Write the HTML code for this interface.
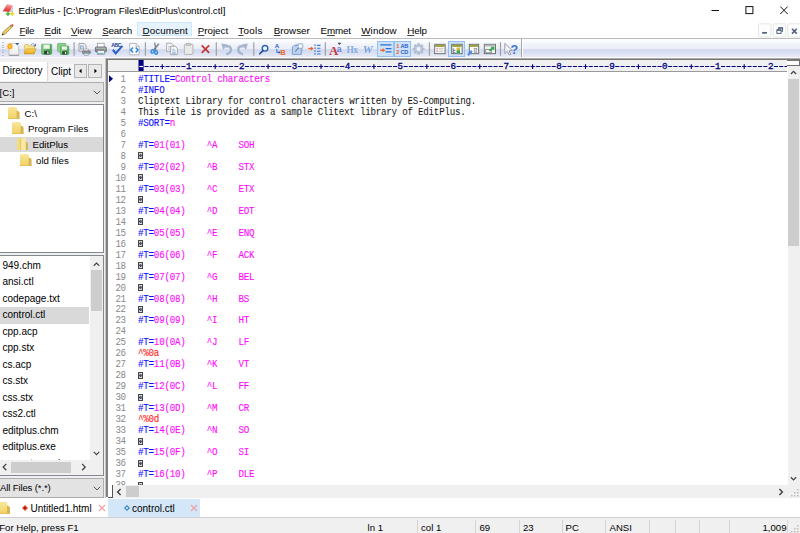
<!DOCTYPE html>
<html><head><meta charset="utf-8"><title>EditPlus</title>
<style>
*{box-sizing:border-box;margin:0;padding:0}
html,body{width:800px;height:533px;overflow:hidden;background:#fff}
body{position:relative;font-family:"Liberation Sans",sans-serif;font-size:9.6px;color:#000}
.abs{position:absolute}
#title{position:absolute;left:0;top:0;width:800px;height:20px;background:#fff}
#title .t{position:absolute;left:18.5px;top:4.9px;font-size:9.8px;line-height:12px;letter-spacing:0px;white-space:nowrap}
#menu{position:absolute;left:0;top:20px;width:800px;height:18px;background:#fff}
.mi{position:absolute;top:4.9px;line-height:12px;white-space:nowrap;font-size:9.8px}
.mi u{text-decoration:underline;text-underline-offset:0.8px;text-decoration-thickness:0.8px;text-decoration-color:#444}
#docsel{position:absolute;left:137.2px;top:2.3px;width:55px;height:14.2px;background:#e5f3ff;border:1px solid #cce8ff}
#tb{position:absolute;left:0;top:38px;width:800px;height:20px;border-top:1px solid #bcbcbc;border-bottom:1px solid #f9f9fb;background:linear-gradient(#fdfdfe 0%,#fbfcfe 12%,#f2f4fb 28%,#ebeef8 54%,#d4daef 59%,#d9dff2 75%,#e8ebf8 100%)}
.sep{position:absolute;top:4px;width:1px;height:13px;background:#9a9a9a}
.ic{position:absolute;top:4px;width:13px;height:13px}
.hot{position:absolute;top:2px;height:16px;background:#cde1f8;border:1px solid #97c0ee}
#left{position:absolute;left:0;top:59.5px;width:106px;height:439px;background:#f0f0f0}
#lefttop{position:absolute;left:0;top:58px;width:106px;height:2px;background:#eeeef2}
#edframe{position:absolute;left:106px;top:59px;width:694px;height:439px;background:#fff}
#ruler{position:absolute;left:107.5px;top:60px;width:679.6px;height:11.8px;overflow:hidden;background:#f0f0f0;border-bottom:1px solid #9a9a9a}
#ruler .rt{position:absolute;left:30px;top:-1.5px;font-family:"Liberation Mono",monospace;font-size:8.8px;line-height:12px;color:#000080;white-space:pre;letter-spacing:0.01px;-webkit-text-stroke:0.3px #000080}
.ln{position:absolute;left:106.9px;width:18.5px;text-align:right;font-family:"Liberation Mono",monospace;font-size:9.2px;letter-spacing:-0.6px;line-height:11px;height:11px;color:#8a8a8a;white-space:pre;transform:scaleY(1.1);transform-origin:0 8px}
.cl{position:absolute;left:138px;font-family:"Liberation Mono",monospace;font-size:9.2px;line-height:11px;height:11px;white-space:pre;letter-spacing:-0.23px;-webkit-text-stroke:0.1px currentColor;transform:scaleY(1.1);transform-origin:0 8px}
.cc{position:absolute;left:137.9px;width:5.4px;height:7px;border:1px solid #4a4642;background:radial-gradient(circle at 50% 50%,#46546e 0 1px,#ccd6d6 1.6px)}
.b{color:#1010ff}
.m{color:#ff08ff}
.r{color:#ff2020}
.k{color:#111;-webkit-text-stroke:0}
.fi{position:absolute;left:0;width:89px;height:16.4px;line-height:16.4px;padding-left:2.5px;font-size:10px;white-space:nowrap}
.fi.sel{background:#d9d9d9}
.ti{position:absolute;left:1px;height:16px;line-height:16px;font-size:9.7px;white-space:nowrap;margin-top:0.6px}
#status{position:absolute;left:0;top:517.2px;width:800px;height:16px;background:#f0f0f0;border-top:1px solid #d0d0d0}
#status span{position:absolute;top:3.7px;line-height:12px;font-size:9.6px;white-space:nowrap}
#status i{position:absolute;top:2px;width:1px;height:13px;background:#d4d4d4}
</style></head><body>

<div id="title">
 <svg class="abs" style="left:0;top:0" width="18" height="20" viewBox="0 0 18 20"><defs><linearGradient id="rg" x1="0.3" y1="0" x2="0" y2="1"><stop offset="0" stop-color="#f6aaa4"/><stop offset="0.45" stop-color="#ec5a56"/><stop offset="1" stop-color="#dc2a2c"/></linearGradient></defs><path d="M9.4 12L12.9 5.6L13.1 12.4Z" fill="#c4d6ea"/><path d="M7.1 3.9L12.9 5.6L9.4 12L2.8 11.25Z" fill="url(#rg)"/><path d="M8 11.7l0.7 1.5l1.5 0.7l-1.5 0.7l-0.7 1.5l-0.7-1.5l-1.5-0.7l1.5-0.7z" fill="#35b53a" stroke="#35b53a" stroke-width="0.6"/><path d="M12.2 11.5l0.7 1.5l1.5 0.7l-1.5 0.7l-0.7 1.5l-0.7-1.5l-1.5-0.7l1.5-0.7z" fill="#f2d21c" stroke="#f2d21c" stroke-width="0.6"/></svg>
 <div class="t">EditPlus - [C:\Program Files\EditPlus\control.ctl]</div>
 <svg class="abs" style="left:700px;top:0" width="100" height="20" viewBox="700 0 100 20"><path d="M711.5 10.5h7.5" stroke="#111" stroke-width="1"/><rect x="745.9" y="6.6" width="7" height="7" fill="none" stroke="#111" stroke-width="1"/><path d="M780.3 6.6l7.4 7.4M787.7 6.6l-7.4 7.4" stroke="#111" stroke-width="1"/></svg>
</div>

<div id="menu">
 <svg class="abs" style="left:0;top:0" width="16" height="18" viewBox="0 20 16 18"><path d="M2 35.2L3.4 31.8L10.8 25.2L12.4 26.8L5.2 33.9Z" fill="#f2cf62" stroke="#7a5c22" stroke-width="0.6"/><path d="M10 25.9l1.7 1.6" stroke="#5aa05a" stroke-width="0.9"/><path d="M10.8 25.2L11.8 24.3Q12.6 23.9 13.2 24.6Q13.8 25.3 13.3 26L12.4 26.8Z" fill="#e0484c"/><path d="M2 35.2L2.7 33.5L3.8 34.5Z" fill="#222"/></svg>
 <div id="docsel"></div>
<span class="mi" style="left:19.5px;letter-spacing:-0.3px"><u>F</u>ile</span>
<span class="mi" style="left:44.5px;letter-spacing:-0.1px"><u>E</u>dit</span>
<span class="mi" style="left:71px;letter-spacing:-0.11px"><u>V</u>iew</span>
<span class="mi" style="left:102.2px;letter-spacing:-0.23px"><u>S</u>earch</span>
<span class="mi" style="left:142.6px;letter-spacing:0.055px"><u>D</u>ocument</span>
<span class="mi" style="left:197.8px;letter-spacing:-0.03px"><u>P</u>roject</span>
<span class="mi" style="left:238.3px;letter-spacing:0.3px"><u>T</u>ools</span>
<span class="mi" style="left:273.8px;letter-spacing:0px"><u>B</u>rowser</span>
<span class="mi" style="left:320.5px;letter-spacing:-0.13px">E<u>m</u>met</span>
<span class="mi" style="left:361.2px;letter-spacing:0.13px"><u>W</u>indow</span>
<span class="mi" style="left:407.2px;letter-spacing:-0.11px"><u>H</u>elp</span>
 <svg class="abs" style="left:750px;top:0" width="50" height="18" viewBox="750 20 50 18"><g fill="#fdfdfd" stroke="#e6e6e6" stroke-width="1"><rect x="758.5" y="23.8" width="12.5" height="13.2" rx="1"/><rect x="773.3" y="23.8" width="12.5" height="13.2" rx="1"/><rect x="787.8" y="23.8" width="13" height="13.2" rx="1"/></g><path d="M762.2 32.8h4.8" stroke="#51617d" stroke-width="1.7"/><path d="M778.6 29.4v-1.6h4v3.6h-1.4" fill="none" stroke="#51617d" stroke-width="1"/><path d="M778.4 28h4.4" stroke="#51617d" stroke-width="1.4"/><rect x="776.9" y="29.9" width="4.2" height="3.5" fill="none" stroke="#51617d" stroke-width="1"/><path d="M776.9 30.1h4.2" stroke="#51617d" stroke-width="1.4"/><path d="M792 28.8l4.8 4.8M796.8 28.8l-4.8 4.8" stroke="#51617d" stroke-width="1.6"/></svg>
</div>

<div id="tb">
<div class="abs" style="left:1.5px;top:3px;width:2px;height:15px;background:repeating-linear-gradient(#b4bccd 0 1px,transparent 1px 2.5px)"></div>
<div class="hot" style="left:377px;top:2px;width:17px;height:15.7px"></div>
<div class="hot" style="left:393.5px;top:2px;width:17px;height:15.7px"></div>
<div class="hot" style="left:448px;top:2px;width:17px;height:15.7px"></div>
<div class="abs" style="left:521px;top:0;width:1px;height:18px;background:#a8a8a8"></div>
<div class="abs" style="left:522px;top:0;width:1px;height:18px;background:#fbfcff"></div>
<svg class="abs" style="left:0;top:0" width="530" height="20" viewBox="0 0 530 20">
<g stroke="#9c9c9c" stroke-width="1.1"><path d="M74.1 3.2v13.6M145.4 3.2v13.6M216.3 3.2v13.6M253.8 3.2v13.6M325.3 3.2v13.6M429.4 3.2v13.6M500.5 3.2v13.6"/></g>
<!-- new -->
<g transform="translate(6.6,3.8) scale(0.78)">
 <defs><linearGradient id="pg" x1="0" y1="0" x2="0" y2="1"><stop offset="0" stop-color="#ffffff"/><stop offset="1" stop-color="#ececec"/></linearGradient><radialGradient id="sg"><stop offset="0" stop-color="#ffe36a"/><stop offset="0.55" stop-color="#fdb31c"/><stop offset="1" stop-color="#f89a10"/></radialGradient></defs>
 <path d="M3 1h9l3.6 3.4v11.6h-12.6z" fill="url(#pg)" stroke="#b9b9b9" stroke-width="1"/>
 <path d="M3 16h12.6" stroke="#8e8e8e" stroke-width="1.2"/>
 <path d="M11 0.2h5.4l-2.7 2.8z" fill="#3c5e9e"/>
 <path d="M4.2 0l1 2l2.2-0.6l-0.6 2.2l2 1l-2 1l0.6 2.2l-2.2-0.6l-1 2l-1-2l-2.2 0.6l0.6-2.2l-2-1l2-1l-0.6-2.2l2.2 0.6z" fill="#fbb023"/>
 <circle cx="4.2" cy="4.6" r="2.9" fill="url(#sg)"/>
</g>
<!-- open -->
<g transform="translate(23.8,3.8) scale(0.78)">
 <defs><linearGradient id="og" x1="0" y1="0" x2="0" y2="1"><stop offset="0" stop-color="#fbd65a"/><stop offset="1" stop-color="#eaa91c"/></linearGradient></defs>
 <path d="M0.8 3.4q0-1.2 1.2-1.2h4l1.4 1.6h5.4q1 0 1 1v9h-13z" fill="#f7e38e" stroke="#c9a23c" stroke-width="0.7"/>
 <path d="M0.6 14.2l2.8-6.4h12.4l-3 6.4z" fill="url(#og)" stroke="#b98a1c" stroke-width="0.7"/>
 <path d="M9.4 2.4q2.4-2.2 4.6-0.2" fill="none" stroke="#44689f" stroke-width="1.1" stroke-dasharray="1.6 0.8"/><path d="M15.6 0.8v3.6h-3.4z" fill="#44689f"/>
</g>
<defs><linearGradient id="svg1" x1="0" y1="0" x2="1" y2="0.3"><stop offset="0" stop-color="#8ed08f"/><stop offset="1" stop-color="#46a24c"/></linearGradient></defs>
<!-- save -->
<g transform="translate(40.9,4.7) scale(0.75)">
 <rect x="1" y="0.8" width="13.4" height="13.4" rx="1" fill="url(#svg1)" stroke="#55a85a" stroke-width="1"/>
 <rect x="3.6" y="1.2" width="8.2" height="5.6" fill="#eaf6ea"/>
 <rect x="4.2" y="9.4" width="7" height="4.8" fill="#2c4434"/><rect x="8.4" y="10.4" width="1.8" height="3" fill="#e6efe6"/>
</g>
<!-- save all -->
<g transform="translate(56.8,3.8) scale(0.78)">
 <rect x="1" y="0.8" width="10.5" height="10.5" rx="1" fill="#8fd091" stroke="#62b066" stroke-width="1"/>
 <rect x="4.6" y="4.2" width="10.8" height="10.8" rx="1" fill="url(#svg1)" stroke="#55a85a" stroke-width="1"/>
 <rect x="6.6" y="4.6" width="6.6" height="4.2" fill="#eaf6ea"/>
 <rect x="7" y="11" width="5.8" height="4" fill="#2c4434"/><rect x="10.4" y="11.8" width="1.5" height="2.4" fill="#e6efe6"/>
</g>
<!-- print preview -->
<g transform="translate(78.2,3.8) scale(0.78)">
 <path d="M1 0.8h6.5l2.5 2.5v7.5h-9z" fill="#f2f2f2" stroke="#8c8c8c" stroke-width="1"/>
 <rect x="2.8" y="4" width="3.6" height="4" fill="#cfe0f4" stroke="#6a8fc0" stroke-width="0.8"/>
 <rect x="7" y="8" width="6" height="3" fill="#fafafa" stroke="#8c8c8c" stroke-width="0.7"/>
 <rect x="5.5" y="10.3" width="10" height="3.6" rx="0.8" fill="#8c8f94" stroke="#5f6266" stroke-width="0.7"/>
 <rect x="7.4" y="13" width="6" height="2.8" fill="#fff" stroke="#7c7c7c" stroke-width="0.7"/>
 <rect x="8" y="13.6" width="4.6" height="1" fill="#39a5c8"/>
</g>
<!-- print -->
<g transform="translate(94.8,3.6) scale(0.78)">
 <rect x="3.4" y="0.8" width="8.6" height="5.4" fill="#fdfdfd" stroke="#8c8c8c" stroke-width="0.9"/>
 <rect x="0.8" y="5.6" width="14" height="6.4" rx="1.2" fill="#86898e" stroke="#55585c" stroke-width="0.9"/>
 <rect x="1.6" y="6.4" width="12.4" height="1.6" fill="#b8babd"/>
 <rect x="3.2" y="10.4" width="9.2" height="5" fill="#fff" stroke="#7c7c7c" stroke-width="0.8"/>
 <rect x="4.2" y="13" width="7.2" height="1.2" fill="#39a5c8"/>
 <rect x="12.2" y="8.6" width="1.4" height="1.2" fill="#7fe07f"/>
</g>
<!-- spell -->
<g transform="translate(111,3.6) scale(0.78)">
 <text x="0.2" y="5.6" font-family="Liberation Sans" font-size="6.6" font-weight="bold" fill="#1d3f8f" letter-spacing="-0.5">ABC</text>
 <path d="M2.4 9.2l3.6 4.6l8.6-9.6" fill="none" stroke="#2a62c9" stroke-width="2.8"/>
</g>
<!-- browser -->
<g transform="translate(128.8,3.8) scale(0.78)">
 <path d="M1.2 0.8h8l4 4v10.6h-12z" fill="#fbfbfb" stroke="#a9a9a9" stroke-width="1"/>
 <path d="M9.2 0.8v4h4" fill="#e4e4e4" stroke="#a9a9a9" stroke-width="0.8"/>
 <path d="M5.4 6L2.4 9.2l3 3.2M8.8 6l3 3.2l-3 3.2" fill="none" stroke="#2f86e0" stroke-width="2"/>
</g>
<!-- cut -->
<g transform="translate(150.2,3.6) scale(0.78) rotate(16 6.4 8)">
 <path d="M3.6 0.4L7.8 9.6M9.2 0.4L5 9.6" stroke="#737a82" stroke-width="1.6" fill="none"/>
 <ellipse cx="4" cy="12.2" rx="1.8" ry="2.3" fill="none" stroke="#2d8ae0" stroke-width="1.8" transform="rotate(25 4 12.2)"/>
 <ellipse cx="8.8" cy="12.2" rx="1.8" ry="2.3" fill="none" stroke="#2d8ae0" stroke-width="1.8" transform="rotate(-25 8.8 12.2)"/>
</g>
<!-- copy -->
<g transform="translate(165.8,3.6) scale(0.78)">
 <path d="M1 0.8h6l2.6 2.6v7.8h-8.6z" fill="#f6f6f6" stroke="#9c9c9c" stroke-width="1"/>
 <path d="M2.8 5h4.6M2.8 7h4.6M2.8 9h2.4" stroke="#a9c0df" stroke-width="0.9"/>
 <path d="M6.2 4.6h6l2.6 2.6v8.2h-8.6z" fill="#fbfbfb" stroke="#949494" stroke-width="1"/>
 <path d="M8 8.6h3.4M8 10.6h5M8 12.6h5M8 14.2h5" stroke="#7fa4d8" stroke-width="0.9"/>
</g>
<!-- paste -->
<g transform="translate(183.6,3.6) scale(0.78)">
 <rect x="1" y="2.2" width="11" height="13" rx="1" fill="#e9e9ea" stroke="#adadad" stroke-width="1.1"/>
 <rect x="4" y="0.8" width="5" height="2.8" fill="#c9c9c9" stroke="#a8a8a8" stroke-width="0.7"/>
</g>
<!-- delete -->
<g transform="translate(200.6,5.2) scale(0.78)">
 <path d="M1.4 1.4l9.6 9.8M11 1.4l-9.6 9.8" stroke="#c93632" stroke-width="2.2" fill="none"/>
</g>
<!-- undo -->
<g transform="translate(221,4) scale(0.78)">
 <path d="M6.6 14.6Q13.6 12.4 12.6 7Q11.6 3.4 6 4.6" fill="none" stroke="#a6b6cc" stroke-width="3.2"/><path d="M0.4 0.8l8 1.2l-5.6 7z" fill="#a6b6cc"/>
</g>
<!-- redo -->
<g transform="translate(248.2,4) scale(-0.78,0.78)">
 <path d="M6.6 14.6Q13.6 12.4 12.6 7Q11.6 3.4 6 4.6" fill="none" stroke="#a6b6cc" stroke-width="3.2"/><path d="M0.4 0.8l8 1.2l-5.6 7z" fill="#a6b6cc"/>
</g>
<!-- find -->
<g transform="translate(259,5.4) scale(0.7)">
 <circle cx="8.6" cy="5.6" r="4" fill="#f4f9ff" stroke="#2a5fb4" stroke-width="2"/>
 <path d="M5.6 8.8L1.2 13.4" stroke="#1f4f9f" stroke-width="2.4" stroke-linecap="round"/>
</g>
<!-- replace -->
<g transform="translate(274.4,3.6) scale(0.78)">
 <text x="0.4" y="6.6" font-family="Liberation Sans" font-size="8" font-weight="bold" fill="#2a62c9">A</text>
 <text x="7.6" y="15.6" font-family="Liberation Sans" font-size="9.6" font-weight="bold" fill="#f0622a">B</text>
 <path d="M3.2 8v4.6h3" fill="none" stroke="#2a62c9" stroke-width="1.2"/><path d="M5.6 10.6l2.4 2l-2.4 2z" fill="#2a62c9"/>
</g>
<!-- find in files -->
<g transform="translate(291.6,3.8) scale(0.78)">
 <path d="M3 3.4h9.4v11.4h-11.4v-9.4z" fill="#b9d3f1" stroke="#5f8ccc" stroke-width="1"/>
 <path d="M4.8 2h8.8v10" fill="none" stroke="#8fabd2" stroke-width="0.9"/>
 <circle cx="11.4" cy="4" r="3.2" fill="#f6fbff" stroke="#9db4d4" stroke-width="1.3"/>
 <path d="M9 6.6L4.6 11.4" stroke="#7b8794" stroke-width="1.5"/>
</g>
<!-- goto -->
<g transform="translate(308,3.8) scale(0.78)">
 <path d="M0.4 7.4h4" stroke="#f0622a" stroke-width="1.8"/><path d="M3.8 4.6l3.4 2.8l-3.4 2.8z" fill="#f0622a"/>
 <path d="M9 2v2.2M9 5.8v2.2M9 9.6v2.2M9 13.2v2" stroke="#3a78d8" stroke-width="1.5"/>
 <path d="M11.6 3.2h4.4M11.6 7h4.4M11.6 10.8h4.4M11.6 14.4h4.4" stroke="#3a78d8" stroke-width="1.5"/>
</g>
<!-- font -->
<g transform="translate(329.2,3.4) scale(0.78)">
 <text x="-0.4" y="16" font-family="Liberation Serif" font-size="16.5" font-weight="bold" fill="#c8383c">A</text>
 <text x="9.6" y="11.8" font-family="Liberation Sans" font-size="11" font-weight="bold" fill="#6a7fd0">a</text>
 <path d="M10.6 0.4h5l-2.5 2.8z" fill="#3a3f55"/>
</g>
<!-- Hx -->
<g transform="translate(346.6,3.8) scale(0.78)">
 <text x="0" y="13.4" font-family="Liberation Serif" font-size="12" font-weight="bold" fill="#86aede" letter-spacing="-0.8">Hx</text>
</g>
<!-- W -->
<g transform="translate(362.8,3.8) scale(0.78)">
 <text x="0" y="13.6" font-family="Liberation Serif" font-size="14.5" font-style="italic" font-weight="bold" fill="#7ba6dc">W</text>
</g>
<!-- wrap -->
<g transform="translate(379.6,4.6) scale(0.78)">
 <path d="M0.8 1.6h14.4M7.6 6.4h7.6M7.6 10.6h7.6" stroke="#2f6fd0" stroke-width="1.7"/>
 <path d="M0.6 8.6h4" stroke="#f0622a" stroke-width="1.8"/><path d="M3.8 5.8l3.4 2.8l-3.4 2.8z" fill="#f0622a"/>
</g>
<!-- linenum -->
<g transform="translate(396.2,4) scale(0.78)">
 <text x="0.2" y="6.4" font-family="Liberation Sans" font-size="7.4" font-weight="bold" fill="#f0622a">1</text>
 <text x="0.2" y="13.8" font-family="Liberation Sans" font-size="7.4" font-weight="bold" fill="#f0622a">2</text>
 <text x="5.4" y="6.4" font-family="Liberation Sans" font-size="7.2" font-weight="bold" fill="#2a62c9" letter-spacing="-0.3">AB</text>
 <text x="5.4" y="13.8" font-family="Liberation Sans" font-size="7.2" font-weight="bold" fill="#2a62c9" letter-spacing="-0.3">CD</text>
</g>
<!-- gear -->
<g transform="translate(418.6,10) scale(0.78)">
 <g fill="#b3c0d4"><rect x="-1.6" y="-7.6" width="3.2" height="15.2"/><rect x="-1.6" y="-7.6" width="3.2" height="15.2" transform="rotate(45)"/><rect x="-1.6" y="-7.6" width="3.2" height="15.2" transform="rotate(90)"/><rect x="-1.6" y="-7.6" width="3.2" height="15.2" transform="rotate(135)"/></g>
 <circle r="5.4" fill="#bcc8da" stroke="#a3b2c8" stroke-width="0.8"/><circle r="3.1" fill="#eef2fa" stroke="#a3b2c8" stroke-width="0.6"/>
</g>
<!-- win1 -->
<g transform="translate(434.2,4.8)">
 <rect x="0.5" y="0.5" width="10.4" height="9.4" fill="#fbfbfb" stroke="#5e636b" stroke-width="0.9"/>
 <rect x="0.9" y="0.9" width="9.6" height="2.2" fill="#9aa03c"/>
 <path d="M2.2 4.6h1.6M2.2 6.2h1.6M2.2 7.8h1.6" stroke="#e88b86" stroke-width="0.9"/>
 <path d="M4.6 4.6h4.6M4.6 6.2h4.6M4.6 7.8h4.6" stroke="#c6c6c6" stroke-width="0.9"/>
</g>
<!-- win2 -->
<g transform="translate(451.2,4.8)">
 <rect x="0.5" y="0.5" width="10.4" height="9.4" fill="#fbfbfb" stroke="#5e636b" stroke-width="0.9"/>
 <rect x="0.9" y="0.9" width="9.6" height="2.2" fill="#9aa03c"/>
 <path d="M2 4.4v4.6h2.4M2 6.6h2.2" stroke="#4a5568" stroke-width="0.8" fill="none"/>
 <rect x="5.4" y="3.8" width="3.4" height="2.4" fill="#e0b62c"/><rect x="5.4" y="6.4" width="3.4" height="2.8" fill="#3aa84a"/>
</g>
<!-- win3 -->
<g transform="translate(467.8,4.8)">
 <rect x="1.5" y="0.5" width="9.4" height="9.4" fill="#fbfbfb" stroke="#5e636b" stroke-width="0.9"/>
 <rect x="1.9" y="0.9" width="8.6" height="2.2" fill="#9aa03c"/>
 <rect x="6.4" y="4.6" width="2.6" height="4" fill="#d8d8d8" stroke="#8a8a8a" stroke-width="0.6"/>
 <path d="M0.8 10.6l2.6-2.8" stroke="#4f8fe6" stroke-width="2.4" stroke-linecap="round"/>
</g>
<!-- win4 -->
<g transform="translate(483.8,4.8)">
 <rect x="0.5" y="0.5" width="11.2" height="9.4" fill="#f4f4f4" stroke="#5e636b" stroke-width="0.9"/>
 <rect x="0.9" y="0.9" width="10.4" height="1.8" fill="#b9b9b9"/>
 <rect x="2" y="5.6" width="5.4" height="3.4" fill="#fff" stroke="#6a6a6a" stroke-width="0.7"/>
 <path d="M5.6 7.2l3.4-3" stroke="#2ea84a" stroke-width="1.8"/><path d="M6.6 3h4v4z" fill="#2ea84a"/>
</g>
<!-- help -->
<g transform="translate(504.2,3.8)">
 <path d="M0.6 0.6v10.2l2.6-2.4l1.8 3.8l1.6-0.8l-1.8-3.6h3.4z" fill="#f3f5fa" stroke="#8f96a3" stroke-width="0.9"/>
 <text x="6.2" y="11.2" font-family="Liberation Sans" font-size="12.6" font-weight="bold" fill="#3a78d8">?</text>
</g>
</svg>

</div>

<div id="lefttop"></div>
<div id="left">
 <!-- tabs -->
 <div class="abs" style="left:0;top:2px;width:48.3px;height:19.5px;background:#fff;border-right:1px solid #d9d9d9"></div>
 <div class="abs" style="left:49px;top:4.5px;width:24.5px;height:16.5px;background:#f6f6f6"></div>
 <div class="abs" style="left:2.5px;top:5px;font-size:10px;line-height:12px">Directory</div>
 <div class="abs" style="left:51px;top:6px;font-size:10px;line-height:12px;width:22px;overflow:hidden;white-space:nowrap">Clipt</div>
 <div class="abs" style="left:73.6px;top:4px;width:13.6px;height:14.6px;background:#e9e9e9;border:1px solid #b4b4b4"></div>
 <div class="abs" style="left:88.2px;top:4px;width:14.2px;height:14.6px;background:#e9e9e9;border:1px solid #b4b4b4"></div>
 <svg class="abs" style="left:74px;top:3.6px" width="29" height="16" viewBox="0 0 29 16"><path d="M7.6 5.7v4.6l-2.6-2.3z M20.4 5.7v4.6l2.6-2.3z" fill="#000"/></svg>
 <!-- drive combo -->
 <div class="abs" style="left:0;top:22px;width:104px;height:20px;background:#e3e3e3;border:1px solid #adadad;border-left:none"></div>
 <div class="abs" style="left:-0.4px;top:27.4px;font-size:9.6px;line-height:12px">[C:]</div>
 <svg class="abs" style="left:93.2px;top:30.4px" width="8" height="5.3" viewBox="0 0 9 6"><path d="M0.8 0.8L4.5 4.5L8.2 0.8" fill="none" stroke="#444" stroke-width="1"/></svg>
 <!-- tree -->
 <div class="abs" style="left:0;top:44px;width:104px;height:149.5px;background:#fff;border:1px solid #828790;border-left:none"></div>
 <div class="abs" style="left:0;top:77.3px;width:103px;height:14.8px;background:#d9d9d9"></div>
 <svg class="abs" style="left:0;top:44px" width="0" height="0"><defs>
  <linearGradient id="fg" x1="0" y1="0" x2="0" y2="1"><stop offset="0" stop-color="#f8e79c"/><stop offset="1" stop-color="#f0d262"/></linearGradient>
  <g id="fold"><path d="M0 1.6Q0 0 1.6 0H7.4Q9 0 9 1.6V12H0Z" fill="url(#fg)"/><path d="M8.6 3.4Q11.6 4 11.6 6.6V12H8.6Z" fill="#ddb44c"/><path d="M0 11.2h11.6v0.8h-11.6z" fill="#e2bd55"/><circle cx="10.2" cy="9.6" r="0.7" fill="#86bcd6"/></g>
  <g id="foldo"><path d="M0 1.6Q0 0 1.6 0H4.2V12H0Z" fill="#f3dc7c"/><path d="M3.6 0.6L8 0.2Q9.2 0.2 9.2 1.6V12H3.6Z" fill="#f8e9a4"/><path d="M3.6 0.6v11.4" stroke="#d8b654" stroke-width="0.7"/><path d="M8.8 3.6Q11.2 4.2 11.2 6.6V12H8.8Z" fill="#ddb44c"/><circle cx="10" cy="9.6" r="0.7" fill="#86bcd6"/></g>
 </defs></svg>
 <svg class="abs" style="left:8.1px;top:47.1px" width="11.6" height="12" viewBox="0 0 11.6 12"><use href="#fold"/></svg>
 <svg class="abs" style="left:12px;top:62.5px" width="11.6" height="12" viewBox="0 0 11.6 12"><use href="#fold"/></svg>
 <svg class="abs" style="left:16.8px;top:78.5px" width="11.6" height="12" viewBox="0 0 11.6 12"><use href="#foldo"/></svg>
 <svg class="abs" style="left:20px;top:94.3px" width="11.6" height="12" viewBox="0 0 11.6 12"><use href="#fold"/></svg>
 <div class="ti" style="left:24.5px;top:45.5px">C:\</div>
 <div class="ti" style="left:28px;top:61px">Program Files</div>
 <div class="ti" style="left:32.5px;top:76.5px">EditPlus</div>
 <div class="ti" style="left:36px;top:92.5px">old files</div>
</div>
<!-- file list -->
<div class="abs" style="left:0;top:255.2px;width:104px;height:220.8px;background:#fff;border:1px solid #828790;border-left:none;overflow:hidden"></div>
<div class="abs" id="flist" style="left:0;top:0;width:89px;height:460px;overflow:hidden">
<div class="fi" style="top:257.8px">949.chm</div>
<div class="fi" style="top:274.3px">ansi.ctl</div>
<div class="fi" style="top:290.8px">codepage.txt</div>
<div class="fi sel" style="top:307.3px">control.ctl</div>
<div class="fi" style="top:323.8px">cpp.acp</div>
<div class="fi" style="top:340.3px">cpp.stx</div>
<div class="fi" style="top:356.8px">cs.acp</div>
<div class="fi" style="top:373.3px">cs.stx</div>
<div class="fi" style="top:389.8px">css.stx</div>
<div class="fi" style="top:406.3px">css2.ctl</div>
<div class="fi" style="top:422.8px">editplus.chm</div>
<div class="fi" style="top:439.3px">editplus.exe</div>
<div class="fi" style="top:455.8px">emmet_epp.js</div>
</div>
<div class="abs" style="left:90px;top:256.2px;width:12.6px;height:204px;background:#f0f0f0"></div>
<div class="abs" style="left:90.5px;top:270px;width:11.5px;height:41px;background:#cdcdcd"></div>
<svg class="abs" style="left:92.6px;top:262px" width="7" height="4.7" viewBox="0 0 9 6"><path d="M1 4.8L4.5 1.3L8 4.8" fill="none" stroke="#404040" stroke-width="1.4"/></svg>
<svg class="abs" style="left:92.6px;top:451px" width="7" height="4.7" viewBox="0 0 9 6"><path d="M1 1.2L4.5 4.7L8 1.2" fill="none" stroke="#404040" stroke-width="1.4"/></svg>
<div class="abs" style="left:0;top:460px;width:103px;height:15.3px;background:#f0f0f0"></div>
<div class="abs" style="left:11px;top:462px;width:60px;height:10.8px;background:#cdcdcd"></div>
<svg class="abs" style="left:1.5px;top:463.2px" width="5.4" height="8.1" viewBox="0 0 6 9"><path d="M4.8 1L1.3 4.5L4.8 8" fill="none" stroke="#404040" stroke-width="1.4"/></svg>
<svg class="abs" style="left:80.8px;top:463.2px" width="5.4" height="8.1" viewBox="0 0 6 9"><path d="M1.2 1L4.7 4.5L1.2 8" fill="none" stroke="#404040" stroke-width="1.4"/></svg>
<!-- filter combo -->
<div class="abs" style="left:0;top:477.5px;width:104px;height:20px;background:#e3e3e3;border:1px solid #adadad;border-left:none"></div>
<div class="abs" style="left:0;top:481.8px;font-size:9.6px;line-height:12px;letter-spacing:-0.15px">All Files (*.*)</div>
<svg class="abs" style="left:93.2px;top:485.6px" width="8" height="5.3" viewBox="0 0 9 6"><path d="M0.8 0.8L4.5 4.5L8.2 0.8" fill="none" stroke="#444" stroke-width="1"/></svg>

<!-- editor -->
<div id="edframe"></div>
<div class="abs" style="left:105.4px;top:58px;width:694.6px;height:1.4px;background:#adadad"></div>
<div class="abs" style="left:106.4px;top:59.3px;width:693.6px;height:1.4px;background:#767676"></div>
<div class="abs" style="left:105.4px;top:58px;width:1.1px;height:439.5px;background:#c4c4c4"></div>
<div class="abs" style="left:106.4px;top:59.3px;width:1.2px;height:438.2px;background:#808080"></div>
<div id="ruler"><svg class="abs" style="left:0;top:0" width="680" height="12" viewBox="107.5 60 680 12"><rect x="138" y="60" width="5.1" height="11.5" fill="#000080"/><rect x="138.9" y="65.9" width="3.6" height="1.2" fill="#fff"/><text x="188.26" y="69.3" text-anchor="middle" font-family="Liberation Mono" font-size="9.2" fill="#000080" stroke="#000080" stroke-width="0.3">1</text><text x="241.16" y="69.3" text-anchor="middle" font-family="Liberation Mono" font-size="9.2" fill="#000080" stroke="#000080" stroke-width="0.3">2</text><text x="294.05" y="69.3" text-anchor="middle" font-family="Liberation Mono" font-size="9.2" fill="#000080" stroke="#000080" stroke-width="0.3">3</text><text x="346.95" y="69.3" text-anchor="middle" font-family="Liberation Mono" font-size="9.2" fill="#000080" stroke="#000080" stroke-width="0.3">4</text><text x="399.85" y="69.3" text-anchor="middle" font-family="Liberation Mono" font-size="9.2" fill="#000080" stroke="#000080" stroke-width="0.3">5</text><text x="452.75" y="69.3" text-anchor="middle" font-family="Liberation Mono" font-size="9.2" fill="#000080" stroke="#000080" stroke-width="0.3">6</text><text x="505.65" y="69.3" text-anchor="middle" font-family="Liberation Mono" font-size="9.2" fill="#000080" stroke="#000080" stroke-width="0.3">7</text><text x="558.56" y="69.3" text-anchor="middle" font-family="Liberation Mono" font-size="9.2" fill="#000080" stroke="#000080" stroke-width="0.3">8</text><text x="611.45" y="69.3" text-anchor="middle" font-family="Liberation Mono" font-size="9.2" fill="#000080" stroke="#000080" stroke-width="0.3">9</text><text x="664.36" y="69.3" text-anchor="middle" font-family="Liberation Mono" font-size="9.2" fill="#000080" stroke="#000080" stroke-width="0.3">0</text><text x="717.25" y="69.3" text-anchor="middle" font-family="Liberation Mono" font-size="9.2" fill="#000080" stroke="#000080" stroke-width="0.3">1</text><text x="770.15" y="69.3" text-anchor="middle" font-family="Liberation Mono" font-size="9.2" fill="#000080" stroke="#000080" stroke-width="0.3">2</text><path d="M143.89 66.5h4.09M149.18 66.5h4.09M154.47 66.5h4.09M165.05 66.5h4.09M170.34 66.5h4.09M175.63 66.5h4.09M180.92 66.5h4.09M191.50 66.5h4.09M196.79 66.5h4.09M202.08 66.5h4.09M207.37 66.5h4.09M217.95 66.5h4.09M223.24 66.5h4.09M228.53 66.5h4.09M233.82 66.5h4.09M244.40 66.5h4.09M249.69 66.5h4.09M254.98 66.5h4.09M260.27 66.5h4.09M270.85 66.5h4.09M276.14 66.5h4.09M281.43 66.5h4.09M286.72 66.5h4.09M297.30 66.5h4.09M302.59 66.5h4.09M307.88 66.5h4.09M313.17 66.5h4.09M323.75 66.5h4.09M329.04 66.5h4.09M334.33 66.5h4.09M339.62 66.5h4.09M350.20 66.5h4.09M355.49 66.5h4.09M360.78 66.5h4.09M366.07 66.5h4.09M376.65 66.5h4.09M381.94 66.5h4.09M387.23 66.5h4.09M392.52 66.5h4.09M403.10 66.5h4.09M408.39 66.5h4.09M413.68 66.5h4.09M418.97 66.5h4.09M429.55 66.5h4.09M434.84 66.5h4.09M440.13 66.5h4.09M445.42 66.5h4.09M456.00 66.5h4.09M461.29 66.5h4.09M466.58 66.5h4.09M471.87 66.5h4.09M482.45 66.5h4.09M487.74 66.5h4.09M493.03 66.5h4.09M498.32 66.5h4.09M508.90 66.5h4.09M514.19 66.5h4.09M519.48 66.5h4.09M524.77 66.5h4.09M535.35 66.5h4.09M540.64 66.5h4.09M545.93 66.5h4.09M551.22 66.5h4.09M561.80 66.5h4.09M567.09 66.5h4.09M572.38 66.5h4.09M577.67 66.5h4.09M588.25 66.5h4.09M593.54 66.5h4.09M598.83 66.5h4.09M604.12 66.5h4.09M614.70 66.5h4.09M619.99 66.5h4.09M625.28 66.5h4.09M630.57 66.5h4.09M641.15 66.5h4.09M646.44 66.5h4.09M651.73 66.5h4.09M657.02 66.5h4.09M667.60 66.5h4.09M672.89 66.5h4.09M678.18 66.5h4.09M683.47 66.5h4.09M694.05 66.5h4.09M699.34 66.5h4.09M704.63 66.5h4.09M709.92 66.5h4.09M720.50 66.5h4.09M725.79 66.5h4.09M731.08 66.5h4.09M736.37 66.5h4.09M746.95 66.5h4.09M752.24 66.5h4.09M757.53 66.5h4.09M762.82 66.5h4.09M773.40 66.5h4.09M778.69 66.5h4.09M783.98 66.5h4.09" stroke="#000080" stroke-width="1.12" fill="none"/><path d="M159.66 66.5h4.29M161.81 64.2v4.7M212.56 66.5h4.29M214.71 64.2v4.7M265.46 66.5h4.29M267.61 64.2v4.7M318.36 66.5h4.29M320.50 64.2v4.7M371.26 66.5h4.29M373.40 64.2v4.7M424.16 66.5h4.29M426.31 64.2v4.7M477.06 66.5h4.29M479.20 64.2v4.7M529.96 66.5h4.29M532.11 64.2v4.7M582.86 66.5h4.29M585.00 64.2v4.7M635.76 66.5h4.29M637.90 64.2v4.7M688.66 66.5h4.29M690.80 64.2v4.7M741.56 66.5h4.29M743.71 64.2v4.7" stroke="#000080" stroke-width="1.1" fill="none"/></svg></div>
<svg class="abs" style="left:109.2px;top:74.5px" width="4.4" height="7.6" viewBox="0 0 5 8"><path d="M0 0L4.6 4L0 8Z" fill="#000080"/></svg>
<div id="lines" class="abs" style="left:0;top:0;width:788px;height:485px;overflow:hidden">
<div class="ln" style="top:73.8px">1</div>
<div class="cl" style="top:73.8px"><span class="b">#TITLE=</span><span class="m">Control characters</span></div>
<div class="ln" style="top:84.8px">2</div>
<div class="cl" style="top:84.8px"><span class="b">#INFO</span></div>
<div class="ln" style="top:95.8px">3</div>
<div class="cl" style="top:95.8px"><span class="k">Cliptext Library for control characters written by ES-Computing.</span></div>
<div class="ln" style="top:106.7px">4</div>
<div class="cl" style="top:106.7px"><span class="k">This file is provided as a sample Clitext library of EditPlus.</span></div>
<div class="ln" style="top:117.7px">5</div>
<div class="cl" style="top:117.7px"><span class="b">#SORT=</span><span class="m">n</span></div>
<div class="ln" style="top:128.7px">6</div>
<div class="ln" style="top:139.7px">7</div>
<div class="cl" style="top:139.7px"><span class="b">#T=</span><span class="m">01(01)    ^A    SOH</span></div>
<div class="ln" style="top:150.7px">8</div>
<div class="cc" style="top:152.0px"></div>
<div class="ln" style="top:161.7px">9</div>
<div class="cl" style="top:161.7px"><span class="b">#T=</span><span class="m">02(02)    ^B    STX</span></div>
<div class="ln" style="top:172.6px">10</div>
<div class="cc" style="top:173.9px"></div>
<div class="ln" style="top:183.6px">11</div>
<div class="cl" style="top:183.6px"><span class="b">#T=</span><span class="m">03(03)    ^C    ETX</span></div>
<div class="ln" style="top:194.6px">12</div>
<div class="cc" style="top:195.9px"></div>
<div class="ln" style="top:205.6px">13</div>
<div class="cl" style="top:205.6px"><span class="b">#T=</span><span class="m">04(04)    ^D    EOT</span></div>
<div class="ln" style="top:216.6px">14</div>
<div class="cc" style="top:217.9px"></div>
<div class="ln" style="top:227.6px">15</div>
<div class="cl" style="top:227.6px"><span class="b">#T=</span><span class="m">05(05)    ^E    ENQ</span></div>
<div class="ln" style="top:238.5px">16</div>
<div class="cc" style="top:239.8px"></div>
<div class="ln" style="top:249.5px">17</div>
<div class="cl" style="top:249.5px"><span class="b">#T=</span><span class="m">06(06)    ^F    ACK</span></div>
<div class="ln" style="top:260.5px">18</div>
<div class="cc" style="top:261.8px"></div>
<div class="ln" style="top:271.5px">19</div>
<div class="cl" style="top:271.5px"><span class="b">#T=</span><span class="m">07(07)    ^G    BEL</span></div>
<div class="ln" style="top:282.5px">20</div>
<div class="cc" style="top:283.8px"></div>
<div class="ln" style="top:293.5px">21</div>
<div class="cl" style="top:293.5px"><span class="b">#T=</span><span class="m">08(08)    ^H    BS</span></div>
<div class="ln" style="top:304.4px">22</div>
<div class="cc" style="top:305.7px"></div>
<div class="ln" style="top:315.4px">23</div>
<div class="cl" style="top:315.4px"><span class="b">#T=</span><span class="m">09(09)    ^I    HT</span></div>
<div class="ln" style="top:326.4px">24</div>
<div class="ln" style="top:337.4px">25</div>
<div class="cl" style="top:337.4px"><span class="b">#T=</span><span class="m">10(0A)    ^J    LF</span></div>
<div class="ln" style="top:348.4px">26</div>
<div class="cl" style="top:348.4px"><span class="r">^%0a</span></div>
<div class="ln" style="top:359.4px">27</div>
<div class="cl" style="top:359.4px"><span class="b">#T=</span><span class="m">11(0B)    ^K    VT</span></div>
<div class="ln" style="top:370.3px">28</div>
<div class="cc" style="top:371.6px"></div>
<div class="ln" style="top:381.3px">29</div>
<div class="cl" style="top:381.3px"><span class="b">#T=</span><span class="m">12(0C)    ^L    FF</span></div>
<div class="ln" style="top:392.3px">30</div>
<div class="cc" style="top:393.6px"></div>
<div class="ln" style="top:403.3px">31</div>
<div class="cl" style="top:403.3px"><span class="b">#T=</span><span class="m">13(0D)    ^M    CR</span></div>
<div class="ln" style="top:414.3px">32</div>
<div class="cl" style="top:414.3px"><span class="r">^%0d</span></div>
<div class="ln" style="top:425.3px">33</div>
<div class="cl" style="top:425.3px"><span class="b">#T=</span><span class="m">14(0E)    ^N    SO</span></div>
<div class="ln" style="top:436.2px">34</div>
<div class="cc" style="top:437.5px"></div>
<div class="ln" style="top:447.2px">35</div>
<div class="cl" style="top:447.2px"><span class="b">#T=</span><span class="m">15(0F)    ^O    SI</span></div>
<div class="ln" style="top:458.2px">36</div>
<div class="cc" style="top:459.5px"></div>
<div class="ln" style="top:469.2px">37</div>
<div class="cl" style="top:469.2px"><span class="b">#T=</span><span class="m">16(10)    ^P    DLE</span></div>
<div class="ln" style="top:480.2px">38</div>
<div class="cc" style="top:481.5px"></div>
</div>
<!-- v scrollbar -->
<div class="abs" style="left:787.2px;top:60.5px;width:12.4px;height:5.4px;background:#fff;border-bottom:1.3px solid #707070;border-right:1.2px solid #707070"></div>
<div class="abs" style="left:787.6px;top:65.9px;width:12.4px;height:419.1px;background:#f0f0f0"></div>
<div class="abs" style="left:788.3px;top:79.2px;width:10.8px;height:166.4px;background:#cdcdcd"></div>
<svg class="abs" style="left:790.2px;top:70px" width="7" height="5.2" viewBox="0 0 8 6"><path d="M1 4.6L4 1.6L7 4.6" fill="none" stroke="#404040" stroke-width="1.4"/></svg>
<svg class="abs" style="left:790.2px;top:476px" width="7" height="5.2" viewBox="0 0 8 6"><path d="M1 1.4L4 4.4L7 1.4" fill="none" stroke="#404040" stroke-width="1.4"/></svg>
<!-- h scrollbar -->
<div class="abs" style="left:108px;top:485px;width:692px;height:13px;background:#f0f0f0"></div>
<div class="abs" style="left:107.5px;top:485px;width:5.5px;height:12.5px;background:#fff;border-right:1px solid #555;border-bottom:1px solid #555"></div>
<div class="abs" style="left:126px;top:485.5px;width:12.7px;height:11.5px;background:#cdcdcd"></div>
<svg class="abs" style="left:116px;top:487.5px" width="6" height="8" viewBox="0 0 6 8"><path d="M4.6 1L1.6 4L4.6 7" fill="none" stroke="#404040" stroke-width="1.4"/></svg>
<svg class="abs" style="left:777.5px;top:487.5px" width="6" height="8" viewBox="0 0 6 8"><path d="M1.4 1L4.4 4L1.4 7" fill="none" stroke="#404040" stroke-width="1.4"/></svg>
<svg class="abs" style="left:791px;top:489px" width="8" height="8" viewBox="0 0 8 8"><path d="M6 0h1.5v1.5H6z M6 3h1.5v1.5H6z M3 3h1.5v1.5H3z M6 6h1.5v1.5H6z M3 6h1.5v1.5H3z M0 6h1.5v1.5H0z" fill="#bdbdbd"/></svg>

<!-- doc tabs -->
<div class="abs" style="left:0;top:498px;width:800px;height:19px;background:#fff"></div>
<svg class="abs" style="left:0;top:501.5px" width="10.2" height="12" viewBox="1.6 0 10.2 12"><use href="#fold"/></svg>
<div class="abs" style="left:107.5px;top:499.3px;width:92.5px;height:17.5px;background:#d3e7f8"></div>
<svg class="abs" style="left:22px;top:505px" width="6" height="6" viewBox="0 0 6 6"><path d="M3 0L6 3L3 6L0 3Z" fill="#e2481f"/><circle cx="3" cy="3" r="1" fill="#7a1c0c"/></svg>
<div class="abs" style="left:30.5px;top:502.8px;font-size:10px;line-height:12px;white-space:nowrap">Untitled1.html</div>
<svg class="abs" style="left:97.5px;top:504px" width="8" height="8" viewBox="0 0 8 8"><path d="M1 1l6 6M7 1l-6 6" stroke="#eea4a4" stroke-width="1.3"/></svg>
<svg class="abs" style="left:123.5px;top:505px" width="6" height="6" viewBox="0 0 6 6"><path d="M3 0L6 3L3 6L0 3Z" fill="#3d86c8"/><circle cx="3" cy="3" r="1" fill="#dff"/></svg>
<div class="abs" style="left:132px;top:502.8px;font-size:10px;line-height:12px;white-space:nowrap">control.ctl</div>
<svg class="abs" style="left:190px;top:504px" width="8" height="8" viewBox="0 0 8 8"><path d="M1 1l6 6M7 1l-6 6" stroke="#eea4a4" stroke-width="1.3"/></svg>

<!-- status -->
<div id="status">
 <span style="left:-0.8px">For Help, press F1</span>
 <span style="left:367.5px">ln 1</span>
 <span style="left:421px">col 1</span>
 <span style="left:479.5px">69</span>
 <span style="left:523px">23</span>
 <span style="left:565.5px">PC</span>
 <span style="left:609.5px">ANSI</span>
 <span style="left:762.5px">1,009</span>
 <i style="left:416.5px"></i><i style="left:474.5px"></i><i style="left:518.5px"></i><i style="left:561.5px"></i><i style="left:604.5px"></i><i style="left:649px"></i><i style="left:674.5px"></i><i style="left:699px"></i><i style="left:728.5px"></i><i style="left:787px"></i>
 <svg class="abs" style="left:791px;top:7px" width="8" height="8" viewBox="0 0 8 8"><path d="M6 0h1.5v1.5H6z M6 3h1.5v1.5H6z M3 3h1.5v1.5H3z M6 6h1.5v1.5H6z M3 6h1.5v1.5H3z M0 6h1.5v1.5H0z" fill="#bdbdbd"/></svg>
</div>
</body></html>
